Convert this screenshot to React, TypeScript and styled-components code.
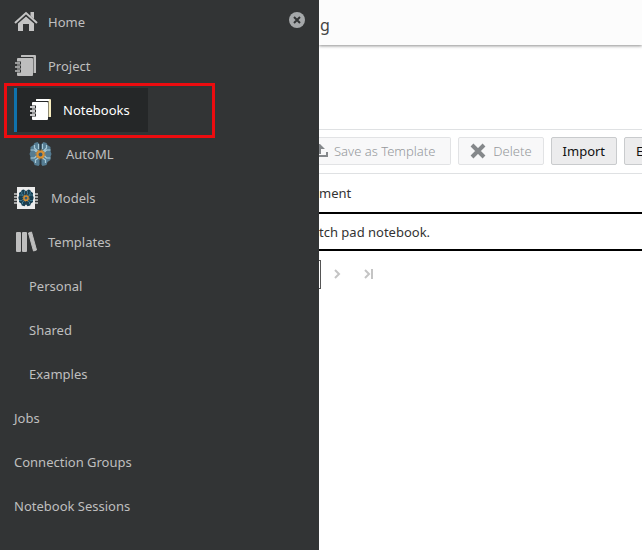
import React from "react";
import styled, { createGlobalStyle } from "styled-components";

const GlobalStyle = createGlobalStyle`
  * { box-sizing: border-box; }
  body {
    margin: 0;
    background: #fff;
    font-family: "Noto Sans", "Open Sans", sans-serif;
    font-size: 13px;
    line-height: 20px;
  }
  button { font: inherit; }
`;

const Page = styled.div`
  display: flex;
  min-height: 100vh;
  overflow: hidden;
`;

const Drawer = styled.nav`
  position: relative;
  flex: 0 0 319px;
  background: #323435;
`;

const CloseButton = styled.button`
  position: absolute;
  top: 12px;
  right: 14px;
  display: flex;
  padding: 0;
  border: 0;
  background: none;
`;

const NavList = styled.ul`
  margin: 0;
  padding: 0 0 0 14px;
  list-style: none;
`;

const NavItem = styled.li`
  position: relative;
  display: flex;
  height: 44px;
`;

const NavLink = styled.a<{ $nested?: boolean; $current?: boolean; $gap?: number }>`
  display: flex;
  align-items: center;
  gap: ${(p) => p.$gap ?? 10}px;
  height: 44px;
  padding-left: ${(p) => (p.$nested ? 15 : 0)}px;
  padding-right: 18px;
  color: ${(p) => (p.$current ? "#fff" : "#bfbfbf")};
  text-decoration: none;
  white-space: nowrap;
  background: ${(p) => (p.$current ? "#252728" : "none")};
  box-shadow: ${(p) => (p.$current ? "inset 3px 0 #0f72ad" : "none")};
`;

const Highlight = styled.span`
  position: absolute;
  top: -5px;
  left: -10px;
  width: 211px;
  height: 55px;
  border: 3px solid #ec0c0f;
  pointer-events: none;
`;

const Main = styled.main`
  flex: 1 1 0;
  min-width: 0;
  overflow: hidden;
  color: #333;
`;

const Header = styled.header`
  display: flex;
  align-items: center;
  height: 45px;
  margin-bottom: 84px;
  padding: 4px 0 0 1px;
  background: #fcfcfc;
  box-shadow: 0 1px 3px rgba(0, 0, 0, 0.45);
  color: #444;
  font-size: 16px;
`;

const Toolbar = styled.div`
  display: flex;
  gap: 7px;
  height: 45px;
  padding: 7px 0 9px;
  border-top: 1px solid #dfe1e3;
  border-bottom: 1px solid #dfe1e3;
`;

const ToolButton = styled.button<{ $clipped?: boolean }>`
  display: flex;
  flex: none;
  align-items: center;
  gap: ${(p) => (p.$clipped ? 6 : 7)}px;
  height: 28px;
  padding: ${(p) => (p.$clipped ? "0 15px 0 0" : "0 11px")};
  border: 1px solid #c9cbcd;
  border-left-width: ${(p) => (p.$clipped ? 0 : 1)}px;
  border-radius: ${(p) => (p.$clipped ? "0 2px 2px 0" : "2px")};
  background: #ececed;
  color: #111;
  white-space: nowrap;

  &:disabled {
    border-color: #e2e3e5;
    background: #f8f8f9;
    color: #96999c;
    font-weight: 300;
  }
`;

const Table = styled.table`
  width: 100%;
  border-collapse: collapse;
  text-align: left;

  th {
    height: 39px;
    padding: 0;
    font-weight: 400;
  }
  td {
    height: 37px;
    padding: 0;
    border-top: 2px solid #000;
    border-bottom: 2px solid #000;
  }
`;

const Pager = styled.div`
  display: flex;
  align-items: center;
  height: 30px;
  margin-top: 8px;
`;

const PageEdge = styled.span`
  width: 2px;
  height: 29px;
  border: 1px solid #555;
  border-left: 0;
`;

const PagerButton = styled.button`
  display: flex;
  align-items: center;
  justify-content: center;
  width: 32px;
  height: 28px;
  padding: 0;
  border: 0;
  background: none;
`;

const HomeIcon = () => (
  <svg width="24" height="22" viewBox="0 0 24 22" aria-hidden="true">
    <path d="M4 12.5 12 5.5l8 7V20h-5v-7H9v7H4Z" fill="#c4c4c4" />
    <path d="m1 12 11-10 11 10" fill="none" stroke="#323435" strokeWidth="4" />
    <path d="M16.5 5V1H20v7Z" fill="#c4c4c4" />
    <path d="m1 12 11-10 11 10" fill="none" stroke="#c4c4c4" strokeWidth="2" />
  </svg>
);

const NotebookIcon = ({ active = false }: { active?: boolean }) => {
  const paper = active ? "#fff" : "#bebebe";
  const edge = active ? "#f8eec0" : "#bebebe";
  const ground = active ? "#252728" : "#323435";
  return (
    <svg width="22" height="22" viewBox="0 0 22 22" aria-hidden="true">
      <path d="M8 0h13q1 0 1 1v17h-2.500V2H7V1q0-1 1-1Z" fill={edge} />
      <path d="M8 0h12v2H7V1q0-1 1-1Z" fill={paper} />
      <path d="M4 3h14q1 0 1 1v16q0 1-1 1H4q-1 0-1-1V4q0-1 1-1Z" fill={paper} />
      <path d="M2 8h5M2 12h5M2 16h5" stroke={ground} strokeWidth="3" />
      <path d="M1 8h5M1 12h5M1 16h5" stroke={paper} strokeWidth="1.5" />
    </svg>
  );
};

const Brain = ({ lobe, trace }: { lobe: string; trace: string }) => (
  <g>
    <path
      d="M11 3 8 0 5 1 4 3 1 5v4l-1 3 1 3v3l3 2 1 3 4 1 2-3 2 3 4-1 1-3 3-2v-3l1-3-1-3V5l-3-2-1-2-3-1Z"
      fill={lobe}
    />
    <path
      d="M5 3v3l3 3M17 3v3l-3 3M1 8h4l2 2M21 8h-4l-2 2M1 16h4l2-2M21 16h-4l-2-2M6 21v-3l3-2M16 21v-3l-3-2M9 2v5M13 2v5"
      fill="none"
      stroke={trace}
      strokeWidth="1.2"
    />
    <path d="M11 2v20" stroke="#2b3d48" strokeWidth="2" />
    <circle cx="11" cy="12.5" r="3" fill="#315a76" stroke="#d98f30" strokeWidth="2" />
    <circle cx="11" cy="12.5" r="4.5" fill="none" stroke="#d98f30" strokeDasharray="1.8 1.7" />
  </g>
);

const AutoMlIcon = () => (
  <svg width="23" height="24" viewBox="0 0 22 24" aria-hidden="true">
    <Brain lobe="#557c92" trace="#a9cbd9" />
  </svg>
);

const ModelsIcon = () => (
  <svg width="24" height="22" viewBox="0 0 24 22" aria-hidden="true">
    <path d="M0 7h24M0 10h24M0 13h24M0 16h24" stroke="#c9c9c9" strokeWidth="1.5" />
    <path d="M3 0h18v22H3Z" fill="#ececec" />
    <g transform="translate(4.3 2.4) scale(.7)">
      <Brain lobe="#173e52" trace="#4d8ba2" />
    </g>
  </svg>
);

const BooksIcon = () => (
  <svg width="24" height="22" viewBox="0 0 24 22" aria-hidden="true">
    <rect x="2" y="1" width="5" height="20" rx="1" fill="#bebebe" />
    <rect x="8" y="1" width="5" height="20" rx="1" fill="#bebebe" />
    <path d="m14.5 2 3-1 5 18-3 1Z" fill="#bebebe" stroke="#bebebe" strokeLinejoin="round" />
  </svg>
);

const CloseIcon = () => (
  <svg width="16" height="16" viewBox="0 0 16 16" aria-hidden="true">
    <circle cx="8" cy="8" r="8" fill="#a5a8aa" />
    <path d="m5 5 6 6M11 5l-6 6" stroke="#323435" strokeWidth="2" />
  </svg>
);

const UploadIcon = () => (
  <svg width="9" height="16" viewBox="0 0 9 16" aria-hidden="true">
    <path d="M0 1h1l5 5H2v5H0Z" fill="#85888b" />
    <path d="M0 13h8V9" fill="none" stroke="#85888b" strokeWidth="2" />
  </svg>
);

const DeleteIcon = () => (
  <svg width="16" height="16" viewBox="0 0 16 16" aria-hidden="true">
    <path d="m2 2 12 12M14 2 2 14" stroke="#85888b" strokeWidth="4" />
  </svg>
);

const NextIcon = () => (
  <svg width="8" height="10" viewBox="0 0 8 10" aria-hidden="true">
    <path d="m2 1 4 4-4 4" fill="none" stroke="#c4c4c4" strokeWidth="2" />
  </svg>
);

const LastIcon = () => (
  <svg width="10" height="10" viewBox="0 0 10 10" aria-hidden="true">
    <path d="m1 1 4 4-4 4M8 0v10" fill="none" stroke="#c4c4c4" strokeWidth="2" />
  </svg>
);

type Entry = {
  label: string;
  icon?: React.ReactNode;
  nested?: boolean;
  current?: boolean;
  gap?: number;
};

const entries: Entry[] = [
  { label: "Home", icon: <HomeIcon /> },
  { label: "Project", icon: <NotebookIcon />, gap: 12 },
  { label: "Notebooks", icon: <NotebookIcon active />, nested: true, current: true, gap: 12 },
  { label: "AutoML", icon: <AutoMlIcon />, nested: true, gap: 14 },
  { label: "Models", icon: <ModelsIcon />, gap: 13 },
  { label: "Templates", icon: <BooksIcon /> },
  { label: "Personal", nested: true },
  { label: "Shared", nested: true },
  { label: "Examples", nested: true },
  { label: "Jobs" },
  { label: "Connection Groups" },
  { label: "Notebook Sessions" },
];

export default function App() {
  return (
    <Page>
      <GlobalStyle />
      <Drawer aria-label="Main navigation">
        <NavList>
          {entries.map((e) => (
            <NavItem key={e.label}>
              <NavLink
                href="#"
                $nested={e.nested}
                $current={e.current}
                $gap={e.gap}
                aria-current={e.current ? "page" : undefined}
              >
                {e.icon}
                {e.label}
              </NavLink>
              {e.current && <Highlight />}
            </NavItem>
          ))}
        </NavList>
        <CloseButton type="button" aria-label="Close navigation">
          <CloseIcon />
        </CloseButton>
      </Drawer>
      <Main>
        <Header>g</Header>
        <Toolbar>
          <ToolButton type="button" disabled $clipped>
            <UploadIcon />
            Save as Template
          </ToolButton>
          <ToolButton type="button" disabled>
            <DeleteIcon />
            Delete
          </ToolButton>
          <ToolButton type="button">Import</ToolButton>
          <ToolButton type="button">Export</ToolButton>
        </Toolbar>
        <Table>
          <thead>
            <tr>
              <th scope="col">ment</th>
            </tr>
          </thead>
          <tbody>
            <tr>
              <td>tch pad notebook.</td>
            </tr>
          </tbody>
        </Table>
        <Pager>
          <PageEdge />
          <PagerButton type="button" aria-label="Next page">
            <NextIcon />
          </PagerButton>
          <PagerButton type="button" aria-label="Last page">
            <LastIcon />
          </PagerButton>
        </Pager>
      </Main>
    </Page>
  );
}
